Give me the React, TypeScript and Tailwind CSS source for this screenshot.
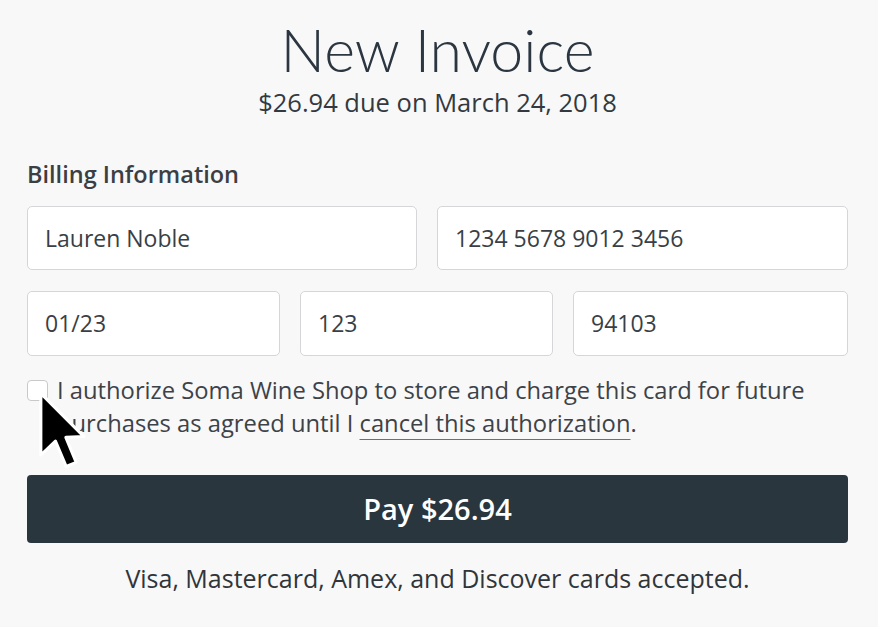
import React from "react";

function Field({ value, className = "" }: { value: string; className?: string }) {
  return (
    <div
      className={`flex items-center rounded-[5px] border border-[#d6d6d8] bg-white px-[17px] text-[23px] text-[#3a3f45] ${className}`}
    >
      {value}
    </div>
  );
}

function Cursor() {
  return (
    <svg
      className="pointer-events-none absolute left-[10px] top-[15px]"
      width="50"
      height="82"
      viewBox="-1 -1 13 21"
    >
      <path
        d="M0 0 L0 16 L3.8 12.4 L6.6 19 L9.2 17.9 L6.5 11.4 L11.2 11.2 Z"
        fill="#000"
        stroke="#fff"
        strokeWidth="0.8"
        strokeLinejoin="round"
      />
    </svg>
  );
}

export default function App() {
  return (
    <div className="min-h-screen bg-[#f8f8f9] font-['Open_Sans',sans-serif] text-[#2b3640]">
      <div className="ml-[27px] w-[821px]">

        {/* HEADER */}

        <div className="pt-[14px] text-center">
          <h1 className="font-['Lato',sans-serif] text-[59px] font-light leading-[72px] text-[#2b3640]">
            New Invoice
          </h1>
          <p className="text-[25.5px] leading-[32px] text-[#33393f]">
            $26.94 due on March 24, 2018
          </p>
        </div>

        {/* BILLING */}

        <h2 className="mt-[41px] text-[23.5px] font-semibold leading-[30px] text-[#3b3f44]">
          Billing Information
        </h2>

        <div className="mt-[17px] grid grid-cols-[390px_1fr] gap-x-[20px]">
          <Field value="Lauren Noble" className="h-[64px]" />
          <Field value="1234 5678 9012 3456" className="h-[64px]" />
        </div>

        <div className="mt-[21px] grid grid-cols-[253px_253px_1fr] gap-x-[20px]">
          <Field value="01/23" className="h-[65px]" />
          <Field value="123" className="h-[65px]" />
          <Field value="94103" className="h-[65px]" />
        </div>

        {/* AUTHORIZATION */}

        <div className="relative mt-[18px] flex items-start gap-[9px]">
          <div className="mt-[6px] h-[21px] w-[21px] shrink-0 rounded-[4px] border border-[#c9c9cc] bg-white" />
          <p className="whitespace-nowrap text-[23.75px] leading-[33px] text-[#3d4247]">
            I authorize Soma Wine Shop to store and charge this card for future
            <br />
            purchases as agreed until I{" "}
            <span className="underline decoration-[#6b7075] decoration-1 underline-offset-[7px]">
              cancel this authorization
            </span>
            .
          </p>
          <Cursor />
        </div>

        {/* PAY */}

        <button className="mt-[35px] flex h-[68px] w-full items-center justify-center rounded-[4px] bg-[#2a363e] text-[29px] font-semibold text-white">
          Pay $26.94
        </button>

        <p className="mt-[20px] text-center text-[25px] leading-[30px] text-[#30353a]">
          Visa, Mastercard, Amex, and Discover cards accepted.
        </p>

      </div>
    </div>
  );
}
